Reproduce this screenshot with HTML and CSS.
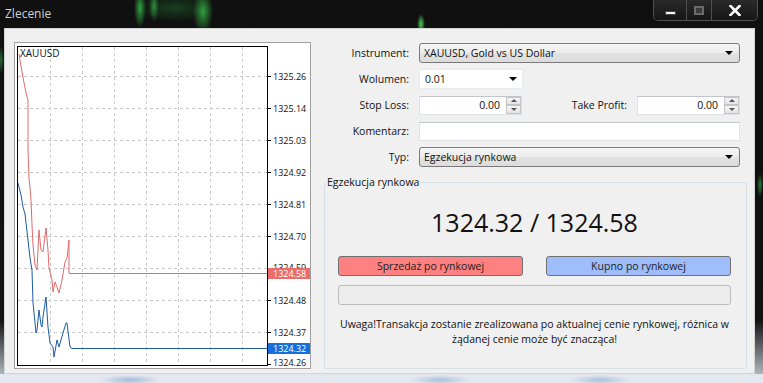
FILE: index.html
```html
<!DOCTYPE html>
<html lang="pl">
<head>
  <meta charset="UTF-8">
  <title>Zlecenie</title>
  <link rel="stylesheet" href="styles.css">
</head>
<body>
  <div class="window">
    <div class="titlebar">
      <span class="title">Zlecenie</span>
      <div class="controls">
        <button class="ctl ctl-min"><span class="min-bar"></span></button>
        <button class="ctl ctl-max"><span class="max-box"></span></button>
        <button class="ctl ctl-close">
          <svg width="12" height="11" viewBox="0 0 12 11"><path d="M1.5 1 L10.5 10 M10.5 1 L1.5 10" stroke="#fff" stroke-width="2.6" stroke-linecap="square"/></svg>
        </button>
      </div>
    </div>

    <div class="client">
      <!-- wykres tickowy -->
      <div class="chart-panel">
        <svg class="chart" width="295" height="325" viewBox="15 43 295 325">
          <g stroke="#c9c9c9" stroke-dasharray="3 3" stroke-width="1">
            <line x1="50.5" y1="47" x2="50.5" y2="365"/>
            <line x1="82.5" y1="47" x2="82.5" y2="365"/>
            <line x1="114.5" y1="47" x2="114.5" y2="365"/>
            <line x1="146.5" y1="47" x2="146.5" y2="365"/>
            <line x1="178.5" y1="47" x2="178.5" y2="365"/>
            <line x1="210.5" y1="47" x2="210.5" y2="365"/>
            <line x1="242.5" y1="47" x2="242.5" y2="365"/>
            <line x1="18" y1="76.5" x2="267" y2="76.5"/>
            <line x1="18" y1="108.5" x2="267" y2="108.5"/>
            <line x1="18" y1="140.5" x2="267" y2="140.5"/>
            <line x1="18" y1="172.5" x2="267" y2="172.5"/>
            <line x1="18" y1="204.5" x2="267" y2="204.5"/>
            <line x1="18" y1="236.5" x2="267" y2="236.5"/>
            <line x1="18" y1="268.5" x2="267" y2="268.5"/>
            <line x1="18" y1="300.5" x2="267" y2="300.5"/>
            <line x1="18" y1="332.5" x2="267" y2="332.5"/>
          </g>
          <g stroke="#000" stroke-width="1">
            <line x1="267" y1="76.5" x2="271" y2="76.5"/>
            <line x1="267" y1="108.5" x2="271" y2="108.5"/>
            <line x1="267" y1="140.5" x2="271" y2="140.5"/>
            <line x1="267" y1="172.5" x2="271" y2="172.5"/>
            <line x1="267" y1="204.5" x2="271" y2="204.5"/>
            <line x1="267" y1="236.5" x2="271" y2="236.5"/>
            <line x1="267" y1="268.5" x2="271" y2="268.5"/>
            <line x1="267" y1="300.5" x2="271" y2="300.5"/>
            <line x1="267" y1="332.5" x2="271" y2="332.5"/>
            <line x1="267" y1="364.5" x2="271" y2="364.5"/>
          </g>
          <g class="axis">
            <text x="273" y="80">1325.26</text>
            <text x="273" y="112">1325.14</text>
            <text x="273" y="144">1325.03</text>
            <text x="273" y="176">1324.92</text>
            <text x="273" y="208">1324.81</text>
            <text x="273" y="240">1324.70</text>
            <text x="273" y="271">1324.59</text>
            <text x="273" y="304">1324.48</text>
            <text x="273" y="336">1324.37</text>
            <text x="273" y="366">1324.26</text>
          </g>
          <polyline fill="none" stroke="#e06b6c" stroke-width="1" points="19,54 22,72 25,88 27,97 28,100 28,150 29,178 30,188 31,200 32,225 33,245 35,265 37,270 39,230 41,250 43,252 46,228 48,250 49,268 52,280 53,292 55,282 57,287 59,293 62,280 65,262 67,258 69,240 69,273.5 267,273.5"/>
          <polyline fill="none" stroke="#1d5aa6" stroke-width="1" points="18,183 21,195 23,207 25,214 28,240 30,258 32,270 33,303 36,333 37,330 39,310 41,325 42,327 43,317 46,297 48,327 50,343 53,347 54,357 57,340 59,347 61,340 63,333 66,323 67,323 70,347 72,348.5 267,348.5"/>
          <rect x="17.5" y="46.5" width="250" height="319" fill="none" stroke="#000" stroke-width="1"/>
          <text class="symbol" x="20" y="57">XAUUSD</text>
          <rect x="268" y="268" width="42" height="11" fill="#ec6b6b"/>
          <text class="tag" x="273" y="277">1324.58</text>
          <rect x="268" y="343" width="42" height="11" fill="#166fdc"/>
          <text class="tag" x="273" y="352">1324.32</text>
        </svg>
      </div>

      <!-- formularz zlecenia -->
      <div class="order">
        <div class="form">
          <div class="row">
            <label class="lbl">Instrument:</label>
            <div class="combo wide"><span class="combo-text">XAUUSD, Gold vs US Dollar</span><span class="arrow"></span></div>
          </div>
          <div class="row">
            <label class="lbl">Wolumen:</label>
            <div class="edit-combo"><span class="combo-text">0.01</span><span class="arrow"></span></div>
          </div>
          <div class="row">
            <label class="lbl">Stop Loss:</label>
            <div class="spin"><span class="spin-value">0.00</span><span class="spin-btns"><span class="up"></span><span class="down"></span></span></div>
            <label class="lbl lbl-tp">Take Profit:</label>
            <div class="spin"><span class="spin-value">0.00</span><span class="spin-btns"><span class="up"></span><span class="down"></span></span></div>
          </div>
          <div class="row">
            <label class="lbl">Komentarz:</label>
            <div class="edit wide"></div>
          </div>
          <div class="row">
            <label class="lbl">Typ:</label>
            <div class="combo wide"><span class="combo-text">Egzekucja rynkowa</span><span class="arrow"></span></div>
          </div>
        </div>

        <fieldset class="market">
          <legend>Egzekucja rynkowa</legend>
          <div class="quote">1324.32 / 1324.58</div>
          <div class="trade-buttons">
            <button class="btn sell">Sprzedaż po rynkowej</button>
            <button class="btn buy">Kupno po rynkowej</button>
          </div>
          <div class="progress"></div>
          <p class="note">Uwaga!Transakcja zostanie zrealizowana po aktualnej cenie rynkowej, różnica w<br>żądanej cenie może być znacząca!</p>
        </fieldset>
      </div>
    </div>

    <div class="frame-bottom"></div>
  </div>
</body>
</html>
```

FILE: styles.css
```css
* {
  box-sizing: border-box;
}

html, body {
  margin: 0;
  background: #0b0b0b;
}

body {
  width: 763px;
  height: 383px;
  overflow: hidden;
  font-family: "Open Sans", "Noto Sans", sans-serif;
  font-size: 10.5px;
  color: #111;
}

/* tło okna: szkło z tapetą pod spodem */
.window {
  display: flex;
  flex-direction: column;
  width: 763px;
  height: 383px;
  background-color: #101010;
  background-image:
    radial-gradient(ellipse 6px 20px at 140px 8px, rgba(60, 210, 80, 0.75), rgba(60, 210, 80, 0)),
    radial-gradient(ellipse 5px 16px at 154px 6px, rgba(60, 210, 80, 0.6), rgba(60, 210, 80, 0)),
    radial-gradient(ellipse 10px 22px at 203px 12px, rgba(60, 210, 80, 0.7), rgba(60, 210, 80, 0)),
    radial-gradient(ellipse 40px 14px at 175px 8px, rgba(40, 150, 60, 0.35), rgba(40, 150, 60, 0)),
    radial-gradient(ellipse 4px 10px at 421px 24px, rgba(80, 230, 100, 0.9), rgba(80, 230, 100, 0)),
    radial-gradient(ellipse 3px 12px at 760px 185px, rgba(60, 200, 80, 0.6), rgba(60, 200, 80, 0)),
    radial-gradient(ellipse 3px 14px at 1px 60px, rgba(60, 200, 80, 0.5), rgba(60, 200, 80, 0)),
    linear-gradient(to bottom, rgb(16, 16, 16) 0px, rgb(18, 18, 18) 320px, rgb(200, 208, 216) 383px);
}

/* pasek tytułu */
.titlebar {
  height: 28px;
  flex-shrink: 0;
  display: flex;
  justify-content: space-between;
  align-items: flex-start;
}

.title {
  padding: 5px 0 0 5px;
  font-size: 12px;
  color: #cfcfcf;
}

.controls {
  display: flex;
  height: 21px;
  margin-right: 5px;
  border: 1px solid #505050;
  border-top: none;
  border-radius: 0 0 5px 5px;
  overflow: hidden;
}

.ctl {
  height: 20px;
  padding: 0;
  border: none;
  border-left: 1px solid #505050;
  background: linear-gradient(#2a2a2a, #161616);
  display: flex;
  align-items: center;
  justify-content: center;
}

.ctl-min {
  width: 32px;
  border-left: none;
}

.ctl-max {
  width: 25px;
}

.ctl-close {
  width: 46px;
}

.min-bar {
  width: 11px;
  height: 4px;
  margin-top: 5px;
  background: #f4f4f4;
  border: 1px solid #444;
}

.max-box {
  width: 10px;
  height: 9px;
  border: 2px solid #6a6a6a;
  background: #3a3a3a;
}

/* obszar okna */
.client {
  height: 346px;
  flex-shrink: 0;
  margin: 0 8px 0 4px;
  padding: 13px 7px 0 9px;
  background: #f0f0f0;
  border: 1px solid #d4d4d4;
  display: flex;
  align-items: flex-start;
  gap: 13px;
}

.frame-bottom {
  height: 9px;
  flex-shrink: 0;
  background-color: #e3e8ee;
  background-image:
    radial-gradient(ellipse 30px 5px at 130px 6px, rgba(150, 175, 215, 0.8), rgba(150, 175, 215, 0)),
    radial-gradient(ellipse 30px 5px at 440px 6px, rgba(150, 175, 215, 0.7), rgba(150, 175, 215, 0)),
    radial-gradient(ellipse 30px 5px at 600px 6px, rgba(150, 175, 215, 0.7), rgba(150, 175, 215, 0));
}

.chart-panel {
  width: 297px;
  height: 327px;
  background: #fff;
  border: 1px solid #a0a0a0;
  flex-shrink: 0;
}

.chart {
  display: block;
}

.chart text {
  font-family: "Open Sans", sans-serif;
  font-size: 9px;
  fill: #111;
}

.chart .symbol {
  font-size: 10px;
}

.chart .tag {
  fill: #fff;
}

.order {
  width: 423px;
  height: 327px;
  display: flex;
  flex-direction: column;
}

.form {
  margin: 1px 0 0 5px;
  width: 411px;
  display: flex;
  flex-direction: column;
  gap: 6px;
}

.row {
  display: flex;
  align-items: center;
  height: 20px;
}

.lbl {
  width: 80px;
  margin-right: 10px;
  text-align: right;
  white-space: nowrap;
}

.lbl-tp {
  width: 105px;
}

.wide {
  flex: 1;
}

.combo {
  height: 20px;
  display: flex;
  align-items: center;
  padding: 0 6px 0 4px;
  border: 1px solid #7a7a7a;
  border-radius: 3px;
  background: linear-gradient(#f6f6f6, #ececec 50%, #e2e2e2 50%, #dcdcdc);
}

.combo-text {
  flex: 1;
}

.arrow {
  width: 0;
  height: 0;
  border-left: 4px solid transparent;
  border-right: 4px solid transparent;
  border-top: 4px solid #000;
}

.edit-combo {
  width: 104px;
  height: 20px;
  display: flex;
  align-items: center;
  padding: 0 5px;
  background: #fff;
  border: 1px solid #e6e9ee;
}

.edit {
  height: 19px;
  background: #fff;
  border: 1px solid #dfe3e8;
  border-top-color: #c2c6cc;
}

.spin {
  width: 103px;
  height: 19px;
  display: flex;
  background: #fff;
  border: 1px solid #dfe3e8;
  border-top-color: #c2c6cc;
}

.spin-value {
  flex: 1;
  text-align: right;
  padding-right: 6px;
  line-height: 17px;
}

.spin-btns {
  width: 15px;
  display: flex;
  flex-direction: column;
}

.spin-btns span {
  flex: 1;
  display: flex;
  align-items: center;
  justify-content: center;
  background: linear-gradient(#f6f6f6, #e4e4e4);
  border: 1px solid #c4c4c4;
}

.spin-btns .up::after {
  content: "";
  border-left: 3px solid transparent;
  border-right: 3px solid transparent;
  border-bottom: 3px solid #555;
}

.spin-btns .down::after {
  content: "";
  border-left: 3px solid transparent;
  border-right: 3px solid transparent;
  border-top: 3px solid #555;
}

/* ramka egzekucji */
.market {
  flex: 1;
  margin: 7px 0 0;
  padding: 0 15px 0 13px;
  border: 1px solid #d5dfe5;
  border-radius: 3px;
  min-width: 0;
}

.market legend {
  padding: 0 1px;
  margin-left: -12px;
  line-height: 16px;
  background: #f0f0f0;
}

.quote {
  margin-top: 17px;
  text-align: center;
  font-size: 25px;
  line-height: 30px;
  color: #111;
}

.trade-buttons {
  margin-top: 19px;
  display: flex;
  justify-content: space-between;
}

.btn {
  width: 185px;
  height: 20px;
  padding: 0;
  font-family: inherit;
  font-size: 10.5px;
  color: #222;
  border: 1px solid #707070;
  border-radius: 3px;
}

.sell {
  background: #fe8080;
}

.buy {
  background: #9ebdfa;
}

.progress {
  margin-top: 9px;
  height: 20px;
  background: #ececec;
  border: 1px solid #bcbcbc;
  border-radius: 3px;
}

.note {
  margin: 12px 0 0;
  text-align: center;
  line-height: 15px;
  white-space: nowrap;
}
```
